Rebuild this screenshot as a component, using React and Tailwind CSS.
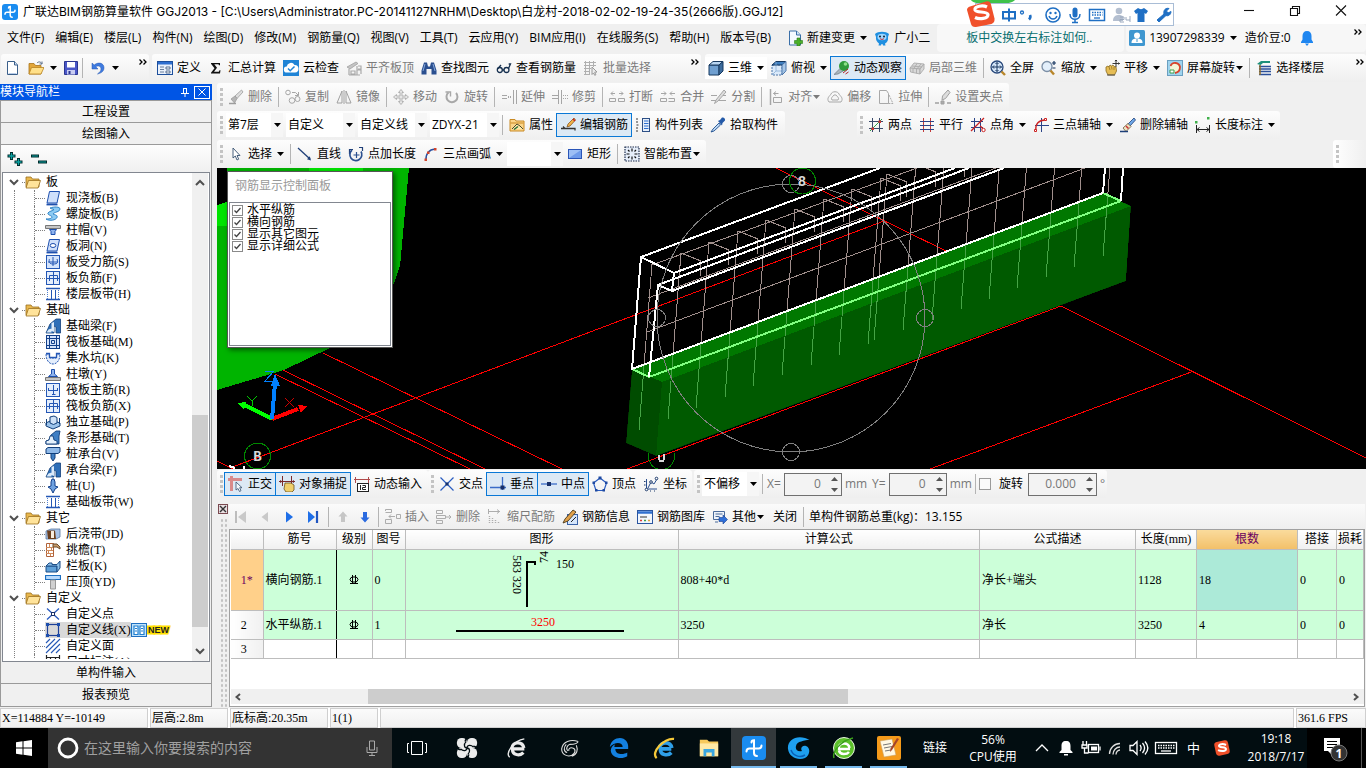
import React from "react";

/* ---------- small drawing helpers ---------- */

const GLYPHS = {
  logo: (
    <>
      <rect width="16" height="16" rx="3" fill="#1a8cf0" />
      <path d="M6.500 4c0-1 .8-1.500 1.700-1.500V11c0 1.500.8 2.300 2 2.300M3 10.300c0-1.500.8-2 2-2h6c1.300 0 2-.6 2-2" fill="none" stroke="#fff" strokeWidth="1.500" strokeLinecap="round" />
    </>
  ),
  newFile: (
    <>
      <path d="M2.500 1.500h7l3 3.500v9.500h-10z" fill="#fff" stroke="#3a5f8a" />
      <path d="M9.500 1.500V5h3" fill="#cfe0f5" stroke="#3a5f8a" />
      <path d="M3.500 13.500h8" stroke="#b8cce8" />
    </>
  ),
  open: (
    <>
      <path d="M1 3.500h5l1.500 2H13V14H1z" fill="#e2a63a" stroke="#a8741a" strokeWidth=".8" />
      <path d="M3.500 7.500H16L13 14H1z" fill="#ffe08a" stroke="#b98422" strokeWidth=".8" />
      <path d="M9 3c2-2 4-1 5 1m0-2.500V4h-2.500" fill="none" stroke="#5a6f8a" strokeWidth="1" />
    </>
  ),
  save: (
    <>
      <path d="M1.500 1.500h13v13h-13z" fill="#4a57c8" stroke="#2c3690" />
      <rect x="4" y="2" width="8" height="5.500" fill="#fff" />
      <rect x="4" y="10" width="8" height="4.500" fill="#c9cdf2" />
      <rect x="5.500" y="11" width="2" height="3" fill="#2c3690" />
    </>
  ),
  undo: <path d="M2 3v6h6L5.800 6.800C8 5 11 6 11 9c0 2-1.500 3.500-3.500 5 4-.8 6.500-3 6.500-6.200C14 3 8.500 1.500 4.200 5z" fill="#3f7be0" stroke="#2456b0" strokeWidth=".5" />,
  define: (
    <>
      <rect x=".5" y="1.500" width="15" height="13" fill="#eaf1fb" stroke="#1d4f9c" />
      <rect x="1" y="2" width="14" height="2.500" fill="#2f6fd0" />
      <path d="M3 7h4M3 9.500h4M3 12h4" stroke="#6a7f9c" />
      <path d="M9 7h4v2H9zM9 11h4v2H9z" fill="#fff" stroke="#35527a" strokeWidth=".8" />
    </>
  ),
  sigma: <path d="M3 3h9v2.200h-1L10.500 4.200H6.300L9 7.800 6 11.800h4.800l.7-1.500h1L12 13.500H3v-.8L6.500 8.200 3 3.800z" fill="#111" />,
  cloud: (
    <>
      <rect width="16" height="16" fill="#1f84d6" />
      <path d="M4 12.500a3 3 0 0 1-.3-6A4.200 4.200 0 0 1 11.500 5a3.700 3.700 0 0 1 .5 7.500z" fill="#fff" />
      <path d="M5 8.500l2.200 2.200L11.500 6.500" fill="none" stroke="#1f84d6" strokeWidth="1.500" />
    </>
  ),
  slabTop: (
    <>
      <path d="M1 7l9-5 2 1.500L4 9z" fill="#c4c4c4" stroke="#9a9a9a" strokeWidth=".7" />
      <path d="M3 9v6M5 11h4v3H5zM11 6v9M3 15h11M12 6h3v3h-3M11 10h4v4" fill="none" stroke="#aaa" strokeWidth="1.200" />
    </>
  ),
  binoc: (
    <>
      <path d="M3 2.500h3l1 4h2l1-4h3l2.500 8v4h-5V9h-5v5.500h-5v-4z" fill="#2a4f8f" />
      <path d="M4 4l-2 7M12 4l2 7" stroke="#86a8dc" />
    </>
  ),
  glasses: (
    <g fill="none" stroke="#16304f" strokeWidth="1.300">
      <circle cx="3.800" cy="10" r="2.500" />
      <circle cx="10.500" cy="10" r="2.500" />
      <path d="M6.300 10h1.700M2 8.500L5 5M12.500 8.500L14.500 4h-1.800" />
    </g>
  ),
  batch: (
    <g fill="none" stroke="#b0b0b0">
      <path d="M1 2.500h12M1 5.500h12M1 8.500h7M1 11.500h6M1 14.500h6M2.500 1v14M6.500 1v14M10.500 1v6" />
      <path d="M9 7l5 5-2.300.2 1.200 2.600-1.200.5L10.500 13 9 14.500z" fill="#ececec" stroke="#999" />
    </g>
  ),
  cube: (
    <>
      <path d="M1 5h10v10H1z" fill="#6f9fd0" stroke="#17395f" />
      <path d="M1 5l4-3.500h10L11 5z" fill="#b9d6f2" stroke="#17395f" />
      <path d="M11 5l4-3.500v9.500L11 15z" fill="#3d6c9e" stroke="#17395f" />
    </>
  ),
  topView: (
    <>
      <path d="M1 5h10v10H1z" fill="#dbeafa" stroke="#4a74a8" strokeDasharray="2 1" />
      <path d="M1 5l4-3.500h10L11 5z" fill="#3f7fc0" stroke="#17395f" />
      <path d="M11 5l4-3.500v9.500L11 15z" fill="#a9c8e8" stroke="#4a74a8" />
      <path d="M5 2v9h10M5 11l-4 4" fill="none" stroke="#8aaed6" strokeWidth=".8" />
    </>
  ),
  orbit: (
    <>
      <path d="M0 14.500l7-7 3 3-6 3.500z" fill="#a8b5bd" stroke="#5d6a72" strokeWidth=".6" />
      <circle cx="10" cy="6" r="5" fill="#2f9a3c" />
      <circle cx="11.500" cy="4" r="1.800" fill="#8ee08a" />
      <path d="M9 13l5-4M11.500 14l3-2" stroke="#b02a2a" />
    </>
  ),
  local3d: (
    <g fill="#d8d8d8" stroke="#aaa" strokeWidth=".9">
      <path d="M1 8l4-5 10 1-4 5z" />
      <path d="M1 8l10 1v5L1.500 12z" />
      <path d="M11 9l4-5v5l-4 5z" />
      <path d="M4 8.500v4M7.500 8.800v4.500M3 6l10 1M8 3.500L5 8.500M12 4L8 8.800" fill="none" />
    </g>
  ),
  fullscreen: (
    <>
      <circle cx="7" cy="7" r="6" fill="#d7e8fa" stroke="#27477a" strokeWidth="1.300" />
      <path d="M11.500 11.500L15 15" stroke="#b8862a" strokeWidth="2.400" />
      <path d="M7 2.500v9M2.500 7h9M5.500 4L7 2.500 8.500 4M5.500 10L7 11.500 8.500 10M4 5.500L2.500 7 4 8.500M10 5.500L11.500 7 10 8.500" fill="none" stroke="#17355f" />
    </>
  ),
  zoom: (
    <>
      <circle cx="6" cy="6.500" r="5" fill="#e3effb" stroke="#7c8fa6" strokeWidth="1.300" />
      <path d="M9.500 10.500L13 14.500" stroke="#b8862a" strokeWidth="2.400" />
      <path d="M11 3h4M13 1v4M11.500 8h3" stroke="#17355f" strokeWidth="1.200" />
    </>
  ),
  pan: (
    <>
      <path d="M2 7l2-1 1 1 1-2 1.500 1L9 5l1 1.500 2 .5.500 4-2 4H4l-2-4z" fill="#e6bd55" stroke="#8a6a1c" strokeWidth=".8" />
      <path d="M5 7l1 3M7.500 6.500l.5 3M10 7v3" stroke="#8a6a1c" strokeWidth=".7" />
      <path d="M3 15h8" stroke="#555" />
      <path d="M12 0v7M8.500 3.500h7M11 1.200L12 0l1 1.200M14.500 2.500l1 1-1 1" fill="none" stroke="#222" strokeWidth=".9" />
    </>
  ),
  rotateScreen: (
    <>
      <rect x=".5" y=".5" width="15" height="15" fill="#9fd4ef" stroke="#6a9fc0" />
      <circle cx="8" cy="8" r="5" fill="#f4f6d8" />
      <path d="M3.500 6A5 5 0 0 1 13 7c0 3-2 5.500-5 6" fill="none" stroke="#d8442c" strokeWidth="1.800" />
      <path d="M3 10h4v3H3z" fill="#fff" stroke="#3f9f4c" />
    </>
  ),
  floors: (
    <>
      <path d="M1 4l4-3h9v2H7L4.500 5z" fill="#1e8f7a" />
      <path d="M3 6.500h12M3 9h12M3 11.500h12M3 14.500h12" stroke="#2b4f9a" strokeWidth="1.400" />
      <path d="M4 5v10" stroke="#8a6a2a" strokeWidth="1.500" />
    </>
  ),
  brush: (
    <g stroke="#9c9c9c" strokeWidth=".8">
      <path d="M13.500 1L7 7l2 2.500 6-6.500z" fill="#ddd" />
      <path d="M7 7l-4 3 3.500 4L9 9.500z" fill="#b5b5b5" />
      <path d="M1 14.500h7" strokeWidth="1.500" />
    </g>
  ),
  copy: (
    <g fill="none" stroke="#a6a6a6">
      <circle cx="3" cy="3.500" r="2.300" />
      <circle cx="7" cy="11.500" r="2.800" />
      <circle cx="12.500" cy="10" r="2.500" />
      <path d="M7 3.500h3.500l3 3M13.500 3v3.500H10" />
    </g>
  ),
  mirror: (
    <g fill="none" stroke="#a0a0a0">
      <path d="M6 2v12H1zM10 2v12h5zM8 1v14" />
    </g>
  ),
  move: <path d="M8 .5l2.500 3H9V7h3.500V5.500l3 2.500-3 2.500V9H9v3.500h1.500l-2.500 3-2.500-3H7V9H3.500v1.500L.5 8l3-2.500V7H7V3.500H5.500z" fill="#e6e6e6" stroke="#a6a6a6" strokeWidth=".8" />,
  rotate: (
    <g fill="none" stroke="#a8a8a8" strokeWidth="2">
      <path d="M4.500 3.500A5.500 5.500 0 1 0 12 4" />
      <path d="M1.500 3h5v4.500" strokeWidth="1.400" />
    </g>
  ),
  extend: (
    <g stroke="#a6a6a6" fill="none">
      <path d="M1 6.500h5M1 9.500h5M12.500 1v14M15.500 1v14" />
      <path d="M7 8h4" strokeDasharray="1 1" strokeWidth="2" />
    </g>
  ),
  trim: (
    <g stroke="#a6a6a6" fill="none">
      <path d="M0 6.500h6M0 9.500h6M6.500 1v14M9.500 1v14" />
      <path d="M11 6.500h5M11 9.500h5" strokeDasharray="1 1" />
    </g>
  ),
  breakIt: (
    <g stroke="#a6a6a6" fill="none">
      <path d="M.5 9.500h6v3h-6zM9.500 9.500h6v3h-6zM2 4.500h4M10 4.500h4M4 2.500l-2 2 2 2M12 2.500l2 2-2 2" />
    </g>
  ),
  merge: (
    <g stroke="#a6a6a6" fill="none">
      <path d="M.5 9.500h6v3h-6zM8.500 9.500h6v3h-6M1 4.500h5M10 4.500h5M4 2.500l2 2-2 2M12 2.500l-2 2 2 2" />
    </g>
  ),
  split: (
    <g stroke="#a6a6a6" fill="none">
      <path d="M0 6.500h6M0 11.500h15M12 6.500h3" />
      <path d="M13 1L5 11l-1.500 3.500L7 12l8-9z" fill="#ddd" />
    </g>
  ),
  align: (
    <g stroke="#a6a6a6" fill="none">
      <path d="M2.500 0v16" strokeWidth="1.500" />
      <path d="M5.500 4.500h5M5.500 8.500h8v5h-8zM8 2.500l-2.500 2 2.500 2" />
    </g>
  ),
  offset: (
    <g stroke="#a8a8a8" fill="none">
      <path d="M2 13c-3-4 1-6 2-8 1-3 7-3 8 0 1 2 5 4 2 8z" />
      <path d="M5 11c-1.500-2 .5-3 1-4 1-1.500 3-1.500 4 0 .5 1 2.500 2 1 4z" />
    </g>
  ),
  stretch: (
    <g stroke="#a8a8a8" fill="none">
      <path d="M1.500 1.500h7l2 3v10h-9z" />
      <path d="M11 6l4 8.500h-5" strokeDasharray="2 1" />
    </g>
  ),
  grip: (
    <g stroke="#a0a0a0" fill="none">
      <path d="M13 1L7.500 7 7 11l3.500-1.500L15 3.500z" fill="#ddd" />
      <path d="M0 14h4M12 14h4" strokeWidth="1.500" />
      <path d="M6 12h3v3H6z" fill="#aaa" />
    </g>
  ),
  props: (
    <>
      <path d="M1 2.500h5l1 1.500h8v10H1z" fill="#fbd58a" stroke="#c98a24" />
      <path d="M1.500 6h13" stroke="#c98a24" />
      <path d="M3 12l5-5 3 2 3 3" fill="#ffe9a8" stroke="#4a4a2a" />
      <path d="M5 12.500l4-3" stroke="#2a6f3a" strokeWidth="1.500" />
    </>
  ),
  editBar: (
    <>
      <path d="M1 11.500h4l-2-2M5 11.500h10v2" fill="none" stroke="#333" strokeWidth="1.300" />
      <path d="M14 1L8 7l-1 3 3-1 5.500-6z" fill="#f1b24a" stroke="#7a4a1a" strokeWidth=".7" />
      <path d="M13 2l2 2" stroke="#c22" strokeWidth="1.500" />
    </>
  ),
  compList: (
    <>
      <path d="M1 2h3M1 5h3M1 11h3M1 14h3M1.500 8h2" stroke="#777" strokeDasharray="2 1" strokeWidth="1.500" />
      <rect x="7.500" y="1.500" width="7" height="13" fill="#e7effa" stroke="#2d4f86" />
      <path d="M9 4h4.500M9 6.500h4.500M9 9h4.500M9 11.500h4.500" stroke="#2d6fd0" strokeWidth="1.200" />
    </>
  ),
  pick: (
    <>
      <path d="M9 6L3 12l-2 3 3-1 6.500-6z" fill="#bcd8f4" stroke="#1f4f8f" strokeWidth=".9" />
      <path d="M8 4l2-1 2-2.500c2-.5 3.500 1 3 3L12.500 6 12 8.500z" fill="#245aa8" />
    </>
  ),
  twoPt: (
    <>
      <path d="M4.500 1v14M11.500 1v14M1 4.500h14M1 11.500h14" stroke="#3a4a6a" />
      <path d="M2 14L14 2" stroke="#2fa04a" />
      <path d="M3.500 10.500h2.500V13H3.500zM10.500 3.500H13V6h-2.500z" fill="#c33" />
    </>
  ),
  parallel: (
    <>
      <path d="M4.500 1v14M11.500 1v14" stroke="#c23a3a" />
      <path d="M1 4.500h14M1 8.500h14M1 12.500h14" stroke="#2a4488" />
    </>
  ),
  ptAngle: (
    <>
      <path d="M4.500 1v14M10.500 1v14M1 4.500h12M1 10.500h12" stroke="#2a4488" />
      <path d="M1 14L14 1M10 9c2 1 3 3 3 5" fill="none" stroke="#c22" strokeWidth="1.300" />
      <circle cx="13.500" cy="13" r="1.700" fill="#fff" stroke="#c22" />
    </>
  ),
  threeAxis: (
    <>
      <path d="M8.500 1v14M2 8.500h14" stroke="#2a4488" />
      <path d="M3 13C2 7 6 3 12 3" fill="none" stroke="#c22" strokeWidth="1.400" />
      <path d="M1.500 12.500h2v2h-2zM11.500 1.500h2v2h-2z" fill="#fff" stroke="#c22" />
    </>
  ),
  delAxis: (
    <>
      <path d="M14 1L8 7l2 2 5.500-6z" fill="#6fa8e8" stroke="#1d3f78" strokeWidth=".8" />
      <path d="M8 6.500L3 11l3 3.500 5-5z" fill="#f0e2c0" stroke="#6a5a3a" strokeWidth=".8" />
      <path d="M0 14.500h8" stroke="#1d3f78" strokeWidth="1.500" />
      <path d="M6 9l2.500 2.500" stroke="#c33" strokeWidth="1.500" />
    </>
  ),
  lenDim: (
    <>
      <path d="M1.500 8v8M14.500 8v8M2 12.500h12M4.500 10.500l-2.500 2 2.500 2M11.500 10.500l2.500 2-2.500 2" fill="none" stroke="#222" />
      <path d="M0 4h2.500v2.500H0zM12 0h2.500v2.500H12z" fill="#3fb04a" />
    </>
  ),
  pointer: <path d="M5 2v10l2.300-2 1.700 4 1.700-.8L9 9.500h3z" fill="#fff" stroke="#35506f" strokeWidth=".9" />,
  line: (
    <>
      <path d="M1 2l12 11" stroke="#1f3f78" strokeWidth="1.300" />
      <path d="M14 14.500l-4-1.200 2.800-3z" fill="#1f3f78" />
    </>
  ),
  ptLen: (
    <>
      <path d="M5 3.500H1.500V8M11 1.500h3.500V5" fill="none" stroke="#1f3f78" strokeWidth="1.200" />
      <path d="M4 4a6 6 0 1 0 9 1.500" fill="none" stroke="#2a4f8f" strokeWidth="1.700" />
      <path d="M8.500 6v6M5.500 9h6" stroke="#2a4f8f" strokeWidth="1.200" />
    </>
  ),
  arc: (
    <>
      <path d="M3 14C2.500 8 6 3.500 12 3" fill="none" stroke="#2a4f9f" strokeWidth="1.400" />
      <path d="M1.500 12.500h2.500v2.500H1.500zM4 5.500h2.500V8H4zM11 2h2.500v2.500H11z" fill="#d2442c" />
    </>
  ),
  rect: (
    <>
      <rect x="1.500" y="3.500" width="13" height="9" fill="#9dbff5" stroke="#2a55b8" />
      <path d="M2 12L14 4v8z" fill="#6f9bea" />
    </>
  ),
  smart: (
    <>
      <rect x="1" y="1" width="14" height="14" fill="#e6eefa" stroke="#1a2a4a" strokeWidth="1.200" strokeDasharray="1.500 1" />
      <path d="M8 2.500v3M8 10.500v3M2.500 8h3M10.500 8h3M4 4l1.500 1.500M12 4l-1.500 1.500M4 12l1.500-1.500M12 12l-1.500-1.500" stroke="#111" strokeWidth="1.200" />
    </>
  ),
  ortho: (
    <>
      <path d="M0 3.500h14M3.500 0v15" stroke="#d98a8a" strokeWidth="3" />
      <path d="M8 6v8l2-1.500 1.500 3 1.500-.8-1.300-3h2.300z" fill="#f3f6fa" stroke="#35506f" strokeWidth=".8" />
    </>
  ),
  snap: (
    <>
      <path d="M3.500 0v10M12.500 0v10M0 5.500h16" stroke="#7a2a2a" />
      <path d="M1 4l2.500 1.500L1 7M15 4l-2.500 1.500L15 7" fill="#7a2a2a" />
      <path d="M6 7h6l3 2v5l-2 2H7l-2-3z" fill="#f0cf6a" stroke="#6a521c" strokeWidth=".8" />
    </>
  ),
  dyn: (
    <>
      <path d="M0 3.500h16M1.500 1v6M14.500 1v6" stroke="#b04a4a" />
      <rect x="3.500" y="7.500" width="11" height="8" fill="#fff" stroke="#222" />
      <path d="M6.500 9v5M8.500 9.500h3v2h-3v2h3.500" fill="none" stroke="#222" />
    </>
  ),
  cross: (
    <>
      <path d="M1.500 1.500l13 13M14.500 1.500l-13 13" stroke="#2a5cc0" strokeWidth="1.200" />
      <rect x="6.500" y="6.500" width="3" height="3" fill="#17306a" />
    </>
  ),
  perp: (
    <>
      <path d="M0 11.500h16M12.500 1v13" stroke="#3a6cc8" strokeWidth="1.300" />
      <rect x="10.500" y="9.500" width="4" height="4" fill="#17306a" />
    </>
  ),
  mid: (
    <>
      <path d="M0 8h16" stroke="#3a6cc8" strokeWidth="1.300" />
      <rect x="6" y="6" width="4" height="4" fill="#17306a" />
    </>
  ),
  vertex: (
    <>
      <path d="M8 2l6.500 5-2.500 7.500H4L1.500 7z" fill="none" stroke="#2a5cc0" strokeWidth="1.200" />
      <path d="M6.500.5h3v3h-3zM.5 5.500h2.500V8H.5zM13 5.500h2.500V8H13zM3 13h2.500v2.500H3zM10.500 13H13v2.500h-2.500z" fill="#1f4aa0" />
    </>
  ),
  coord: (
    <>
      <path d="M3.500 3v10H14M5 12l3-6 3 2 3-5" fill="none" stroke="#2a4f8f" />
      <g fill="#fff" stroke="#1d3a6a">
        <circle cx="3.500" cy="13.500" r="1.300" />
        <circle cx="8" cy="6" r="1.300" />
        <circle cx="13.500" cy="2.500" r="1.300" />
      </g>
      <path d="M1 5.500h1.500M1 9h1.500M7 15h1M11 15h1" stroke="#1d3a6a" />
    </>
  ),
  first: (
    <>
      <path d="M3 2v12" stroke="#bdbdbd" strokeWidth="2" />
      <path d="M13 2v12L5 8z" fill="#c9c9c9" />
    </>
  ),
  prev: <path d="M11 3v10L4.500 8z" fill="#c9c9c9" />,
  next: <path d="M5 2.500v11L12 8z" fill="#1f6fe8" />,
  last: (
    <>
      <path d="M3 2v12l7-6z" fill="#1f6fe8" />
      <path d="M12 2v12" stroke="#1f55c0" strokeWidth="2.200" />
    </>
  ),
  up: <path d="M8 2.500l4.500 5H10V13H6V7.500H3.500z" fill="#c6c6c6" />,
  down: <path d="M8 13.500l4.500-5H10V3H6v5.500H3.500z" fill="#2a6ae0" />,
  insert: (
    <g stroke="#adadad" fill="none">
      <path d="M.5 2V.500h6v3h-6M.5 12v-1.500h6v4h-6z" />
      <path d="M11.500 5.500h4v4h-4zM10 7.500H4M6 5.500l-2 2 2 2" />
    </g>
  ),
  remove: (
    <g stroke="#adadad" fill="none">
      <path d="M.5 1.500h6v3h-6zM.5 6.500h9v3h-9zM.5 11.500h6v3h-6zM10 8h5M13 6l2 2-2 2" />
    </g>
  ),
  scaleBar: (
    <g stroke="#adadad" fill="none">
      <path d="M1 2.500h12M1.500 0v5M10 .5l2.500 2-2.500 2" />
      <path d="M2.500 7v8M5.500 9v6M8.500 11v4M11.500 13v2" strokeDasharray="1 1" strokeWidth="1.400" />
    </g>
  ),
  barInfo: (
    <>
      <rect x="5.500" y="5.500" width="10" height="10" fill="#d6e6fa" stroke="#3a63a8" />
      <path d="M1 14l2-4 8-9 3 2-8 9z" fill="#e0a04a" stroke="#4a3a1a" strokeWidth=".9" />
      <path d="M9 13l5-5" stroke="#222" />
    </>
  ),
  barLib: (
    <>
      <rect x=".5" y="1.500" width="15" height="13" fill="#f2f6fc" stroke="#2a55a0" />
      <path d="M1 3.500h14" stroke="#2f6fd0" strokeWidth="2.500" />
      <path d="M3 8h7" stroke="#333" />
      <path d="M3 11.500h2" stroke="#e03a3a" strokeWidth="1.500" />
      <path d="M7 11.500h2" stroke="#3aa04a" strokeWidth="1.500" />
      <path d="M11 11.500h2" stroke="#e0a03a" strokeWidth="1.500" />
    </>
  ),
  other: (
    <>
      <path d="M1.500 2.500h11v8h-11z" fill="#eef3fa" stroke="#4a6a9a" />
      <path d="M3.500 5h7M3.500 7.500h4M3 13h3" stroke="#4a6a9a" />
      <path d="M7 8.500h4V6l4.500 4.500L11 15v-2.500H7z" fill="#2f6fd8" stroke="#173f90" strokeWidth=".6" />
    </>
  ),
  change: (
    <>
      <path d="M2.500 1h7l4 4v10h-11z" fill="#f4f9ff" stroke="#3a6fa8" />
      <path d="M9.500 1v4h4" fill="#cfe2f5" stroke="#3a6fa8" />
      <path d="M10 8h3v2.500h2.500v3H13V16h-3v-2.500H7.500v-3H10z" fill="#4ab02a" stroke="#2a7a1a" strokeWidth=".6" />
    </>
  ),
  mascot: (
    <>
      <path d="M1 4c3-3 11-3 14 0l-1 3c.5 4-1.500 6-3 6.500l.5 2H9l-.5-1.500h-1L7 15.500H4.500l.5-2C3 12 1.500 10 2 7z" fill="#1f8fe0" />
      <ellipse cx="8" cy="7" rx="4.500" ry="3.200" fill="#9fd6ff" />
      <circle cx="6" cy="6.500" r="1" fill="#123" />
      <circle cx="10" cy="6.500" r="1" fill="#123" />
      <path d="M6 8.500c1 1.200 3 1.200 4 0" fill="none" stroke="#c33" />
    </>
  ),
  user: (
    <>
      <rect width="16" height="16" rx="1.500" fill="#3f97d0" />
      <circle cx="8" cy="5.500" r="3" fill="#fff" />
      <path d="M2.500 13c0-3.500 2-4.500 5.500-4.500s5.500 1 5.500 4.500z" fill="#fff" />
      <path d="M8 9v3" stroke="#3f97d0" />
    </>
  ),
  bell: <path d="M8 1c3 0 4.500 2 4.500 5v3.500L14 12v1H2v-1l1.500-2.500V6C3.500 3 5 1 8 1zM6 13.500h4L8 16z" fill="#1f86f0" />,
  /* navigation tree */
  folder: (
    <>
      <path d="M1 3h5l1.500 2H14v8H1z" fill="#e9b84e" stroke="#9a7020" strokeWidth=".8" />
      <path d="M3.500 6.500H15.500L13 14H1z" fill="#ffe39a" stroke="#9a7020" strokeWidth=".8" />
    </>
  ),
  slab: (
    <>
      <path d="M4.500 1.500h10L12 13H2z" fill="#cfe0fb" stroke="#1d4fae" />
      <path d="M1.500 14.500H12.500" stroke="#1d4fae" strokeWidth="1.800" />
    </>
  ),
  spiral: <path d="M5 2c4-1.500 10-1.500 10 1 0 3-6 3-7 5 2 1 5 1 4 3.500C11 14 5 15.500 1 13c3 0 6-.5 6-2S2 9 3 7s5-2 6-3.500C8 3 6 3 5 2z" fill="#8ccbf4" stroke="#1f78c0" strokeWidth=".9" />,
  cap: (
    <>
      <path d="M.5 3.500h15v3h-15z" fill="#c6c6c6" stroke="#777" />
      <path d="M4.500 7.500h7L10 9.500v3H6v-3z" fill="#8fb4ee" stroke="#1d4fae" />
    </>
  ),
  hole: (
    <>
      <path d="M4.500 1.500h10L12 13H2z" fill="#cfe0fb" stroke="#1d4fae" />
      <path d="M1.500 14.500H12.500" stroke="#1d4fae" strokeWidth="1.800" />
      <ellipse cx="8" cy="7.500" rx="2.800" ry="2" fill="#fff" stroke="#1d4fae" />
    </>
  ),
  gridS: (
    <>
      <rect x="1.500" y="1.500" width="13" height="13" fill="#d5e4fb" stroke="#2457b5" />
      <path d="M8 3v9M4.500 5c0 0-2 5 3.500 5s5-2 4-5M3 8h10" fill="none" stroke="#2457b5" />
    </>
  ),
  gridF: (
    <>
      <rect x="1.500" y="1.500" width="13" height="13" fill="#e4eefc" stroke="#2457b5" />
      <path d="M1 8.500h14M8.500 1v14M4.500 11V5.500h8V11" fill="none" stroke="#2457b5" />
    </>
  ),
  band: (
    <>
      <path d="M1 2.500h14M1 13.500h14" stroke="#2457b5" strokeWidth="1.600" />
      <path d="M6.500 4v9M10.500 4v9" stroke="#2457b5" />
      <path d="M2.500 4v9M13.500 4v9" stroke="#4f7fd0" strokeDasharray="1 1" />
    </>
  ),
  beam: (
    <>
      <path d="M1 15l4-9 6-5h4.500v14H11V9L9 8v7z" fill="#2e6fb8" stroke="#123f7a" strokeWidth=".8" />
      <path d="M1.500 14.500l2-3 3-1v4zM6.500 13V5l2.500-1v10z" fill="#dcebfa" />
    </>
  ),
  raft: (
    <>
      <rect x="1.500" y="1.500" width="13" height="13" fill="#d5e4fb" stroke="#123f8a" />
      <path d="M4.500 1v14M11.500 1v14M1 4.500h14M1 11.500h14M6.500 6.500h3v3h-3z" fill="none" stroke="#123f8a" />
    </>
  ),
  pit: (
    <>
      <path d="M1 4h3l1 4h6l1-4h3c0 6-3 10-7 10S1 10 1 4z" fill="#e4eefc" stroke="#2457b5" strokeDasharray="2 1" />
      <path d="M1 3.500h3.500v4h7v-4H15" fill="none" stroke="#2457b5" strokeWidth="1.300" />
    </>
  ),
  pier: (
    <>
      <path d="M.5 11.500h15v3h-15z" fill="#c6c6c6" stroke="#777" />
      <path d="M6.500 3.500h3V8l3 2.500h-9l3-2.500z" fill="#8fb4ee" stroke="#1d4fae" />
    </>
  ),
  gridR: (
    <>
      <rect x="1.500" y="1.500" width="13" height="13" fill="#e4eefc" stroke="#2457b5" />
      <path d="M8.500 3v10M3 8.500h10M3.500 6v3M12.500 6v3M7 12.500h3.500" fill="none" stroke="#2457b5" />
    </>
  ),
  indep: (
    <>
      <path d="M1 9l6-3 8 3v3l-7 3-7-3z" fill="#9cc3ea" stroke="#123f7a" />
      <path d="M5 3l4-1 3 1.500V9L8.500 10.500 5 9z" fill="#cfe2f7" stroke="#123f7a" />
      <path d="M1.500 5v6M14.500 4v6" stroke="#123f7a" />
    </>
  ),
  strip: (
    <>
      <path d="M1 14v-3l3-1 2-5 5-4h4l-1 5v8z" fill="#3f7fc4" stroke="#123f7a" strokeWidth=".9" />
      <path d="M1 14v-3l3-1 1-4h3l1 4 3 1v3z" fill="#e4f0fb" stroke="#123f7a" strokeWidth=".9" />
    </>
  ),
  pileCap: (
    <>
      <path d="M1 3l2-1.500h12V6l-2 1.500H1z" fill="#8fb9e8" stroke="#123f7a" />
      <path d="M6 7.500h4V12l-2 3-2-3z" fill="#3f7fc4" stroke="#123f7a" />
    </>
  ),
  pile: <path d="M7 1h2l1 3v4l3 1-3 2-2 4-2-4-3-2 3-1V4z" fill="#6fa2e0" stroke="#123f8a" />,
  pour: (
    <>
      <path d="M1 5l5-2h9v8l-4 2H1z" fill="#a9c4ea" stroke="#55779f" strokeWidth=".8" />
      <path d="M2 4.500h8L11 13H3z" fill="#6b3f1f" />
      <path d="M6 5h3v7H6z" fill="#f7ede0" />
    </>
  ),
  eave: (
    <>
      <path d="M1.500 1.500h7v13h-7z" fill="#fff" stroke="#b0623a" />
      <path d="M1 5.500h7M1 8.500h7M1 11.500h7M4.500 2v3M6.500 5v3M3.500 8v3M5.500 11v3" stroke="#d08a5a" />
      <path d="M8 2h4l3 3v2l-3-2H8z" fill="#c79a6a" stroke="#6a4a2a" />
    </>
  ),
  rail: (
    <>
      <path d="M1 8h11v6H1z" fill="#5fa0d8" stroke="#1d4f88" />
      <path d="M1 8l3-3h3v1.500h5L15 3v7l-3 4V8z" fill="#8cc0ea" stroke="#1d4f88" />
    </>
  ),
  coping: (
    <>
      <path d="M.5 1.500h15v4h-15z" fill="#b9dafc" stroke="#1d6fc0" strokeWidth="1.200" />
      <path d="M5.500 6h5v9h-5z" fill="#d0d0d0" stroke="#999" />
    </>
  ),
  custPt: (
    <>
      <path d="M2 2.500l12 11M14 2.500l-12 11" stroke="#2a5cc0" strokeWidth="1.300" />
      <rect x="6.500" y="6.500" width="3" height="3" fill="#fff" stroke="#17306a" />
    </>
  ),
  custLine: (
    <>
      <rect x="2.500" y="2.500" width="11" height="11" fill="none" stroke="#1d3f98" strokeWidth="1.200" />
      <path d="M1 1h3v3H1zM12 1h3v3h-3zM1 12h3v3H1zM12 12h3v3h-3z" fill="#1d4fae" />
    </>
  ),
  custFace: <path d="M1 5l4-4M1 10l9-9M1 15L15 1M6 15l9-9M11 15l4-4" stroke="#2457b5" strokeWidth="1.100" />,
  dimension: <path d="M1 3.500h14M1.500 1v14M5.500 3v5M10.500 3v5M14.500 1v14" stroke="#222" strokeWidth="1.200" />,
  book: (
    <>
      <rect x=".5" y="1.500" width="15" height="13" fill="#bfe2fb" stroke="#1f6fc0" />
      <path d="M3 4h4v8.500H3zM9 4h4v8.500H9z" fill="#fff" stroke="#1f7fd0" strokeWidth="1.200" />
      <path d="M4 6.500h2M4 9h2M10 6.500h2M10 9h2" stroke="#1f7fd0" />
    </>
  ),
};

const Ic = ({ n, c = "size-4" }) => (
  <svg viewBox="0 0 16 16" className={`shrink-0 ${c}`} aria-hidden="true">
    {GLYPHS[n]}
  </svg>
);

const Caret = ({ c = "" }) => (
  <svg viewBox="0 0 7 4" className={`h-1 w-[7px] shrink-0 ${c}`} aria-hidden="true">
    <path d="M0 0h7L3.500 4z" fill="currentColor" />
  </svg>
);

/* One toolbar command: icon, caption and an optional drop-down arrow. */
const Tb = ({ i, t, off, on, arrow, tight }) => (
  <button
    type="button"
    disabled={off}
    className={`flex h-[22px] shrink-0 items-center gap-1 whitespace-nowrap px-[3px] ${
      on ? "bg-[#dce9f5] outline-1 outline-[#0a78d6]" : ""
    } ${off ? "text-[#7b7b7b]" : "text-black"}`}
  >
    {i && <Ic n={i} />}
    {t}
    {arrow && <Caret c="ml-px" />}
    {tight && <Caret c="-ml-[3px]" />}
  </button>
);

const Sep = () => <span className="mx-[2px] h-5 w-px shrink-0 bg-[#b4b4b4]" />;

const Grip = () => (
  <span className="mx-px flex h-[18px] w-[3px] shrink-0 flex-col justify-between">
    {[0, 1, 2, 3].map((k) => (
      <i key={k} className="size-[3px] bg-[#c4c4c4]" />
    ))}
  </span>
);

const Bar = ({ children, c = "" }) => (
  <div
    className={`flex h-[28px] shrink-0 items-center gap-px rounded-[3px] bg-linear-to-b from-[#fdfdfd] to-[#efefef] px-[2px] ${c}`}
  >
    {children}
  </div>
);

const Combo = ({ v, label, w }) => (
  <label className={`relative flex h-[24px] shrink-0 items-center bg-white ${w}`}>
    <select aria-label={label} className="h-full w-full appearance-none bg-white pl-[2px]">
      <option>{v}</option>
    </select>
    <span className="pointer-events-none absolute right-0 flex h-full w-3 items-center justify-center bg-[#f6f6f6]">
      <Caret />
    </span>
  </label>
);

const More = ({ c = "" }) => (
  <button type="button" aria-label="更多" className={`shrink-0 ${c}`}>
    <svg viewBox="0 0 8 6" className="h-[6px] w-2">
      <path d="M.5.500L3 3 .5 5.500M4.500.500L7 3 4.500 5.500" fill="none" stroke="#000" strokeWidth="1.300" />
    </svg>
  </button>
);

/* ---------- title bar ---------- */

function ImeBar() {
  return (
    <div className="absolute top-0 left-[967px] h-7 w-[208px]">
      <svg viewBox="0 0 208 28" className="h-7 w-[208px]" aria-hidden="true">
        <path d="M4 0c2 6 40 6 44 0z" fill="#3fc24a" />
        <rect x="8.500" y="3.500" width="198" height="22" fill="#fff" stroke="#a9bdd6" />
        <path d="M3 6.500L19 1.500q4-1 5 3l3.500 14q.5 4-3 5.500L9 27q-4 .5-5-3L0 10q0-2.500 3-3.500z" fill="#f0502a" />
        <path d="M20 7c-4-2-13-1-12 3 1 3 12 1 13 4.500.5 4.500-9 5-13 3" fill="none" stroke="#fff" strokeWidth="3.200" />
        <g fill="none" stroke="#1f6fc4" strokeWidth="2">
          <path d="M36 12h12v6.500H36zM42 8.500v13" />
          <circle cx="55" cy="12.500" r="1.500" strokeWidth="1.300" />
          <path d="M63 15c1 2 .5 3-1 4.500" strokeWidth="2.600" />
          <circle cx="86" cy="15" r="7" strokeWidth="1.600" />
          <path d="M82 16c1.500 4 6.500 4 8 0" strokeWidth="1.500" />
          <path d="M103 14c0 7 10 7 10 0M108 19v4M105 22.500h6" strokeWidth="1.500" />
        </g>
        <circle cx="83.500" cy="13" r="1.200" fill="#1f6fc4" />
        <circle cx="88.500" cy="13" r="1.200" fill="#1f6fc4" />
        <rect x="105.500" y="7.500" width="5" height="10" rx="2.500" fill="#1f6fc4" />
        <rect x="122.500" y="9.500" width="15" height="11" fill="#fff" stroke="#1f6fc4" strokeWidth="1.500" />
        <path d="M125 12.500h10.500M125 15h10.500" stroke="#1f6fc4" strokeDasharray="1.500 1" strokeWidth="1.300" />
        <path d="M127 18h6" stroke="#1f6fc4" strokeWidth="1.300" />
        <g fill="#b4bfd0">
          <circle cx="152" cy="11" r="3.300" />
          <path d="M146 21c0-5 3-6 6-6 2 0 3 .5 4 1.500V21z" />
        </g>
        <path d="M153 17h4v2.500h-4V22h4M159 17v3h4M163 16v6" fill="none" stroke="#9aa8bd" />
        <path d="M167 11l4-3c1.500 1.500 4.500 1.500 6 0l4 3-2 3-1.500-1v9h-7v-9l-1.500 1z" fill="#1f6fc4" />
        <path d="M190 20l7-6c-1-4 2-6.500 5-5.500l-2.500 2.500 1.500 2 3-1.500c0 3-2.500 5-5 4L192 22z" fill="#1f6fc4" stroke="#1f6fc4" />
      </svg>
    </div>
  );
}

function TitleBar() {
  return (
    <header className="relative flex h-6 items-center bg-white pl-[2px]">
      <Ic n="logo" />
      <h1 className="ml-[5px] text-xs whitespace-nowrap [font-family:Inter,'Noto_Sans_CJK_SC',sans-serif]">
        广联达BIM钢筋算量软件 GGJ2013 - [C:\Users\Administrator.PC-20141127NRHM\Desktop\白龙村-2018-02-02-19-24-35(2666版).GGJ12]
      </h1>
      <div className="mr-[2px] ml-auto flex h-full">
        {[
          ["最小化", "M3 7.500h10"],
          ["还原", "M3.500 5.500h7v7h-7zM5.500 5V3.500h7v7H11"],
          ["关闭", "M3 2.500l10 10M13 2.500l-10 10"],
        ].map(([label, d]) => (
          <button key={label} type="button" aria-label={label} className="flex w-[46px] items-start justify-center pt-[3px]">
            <svg viewBox="0 0 16 16" className="size-4">
              <path d={d} fill="none" stroke="#111" strokeWidth="1.100" />
            </svg>
          </button>
        ))}
      </div>
      <ImeBar />
    </header>
  );
}

function MenuBar() {
  const menus = ["文件(F)", "编辑(E)", "楼层(L)", "构件(N)", "绘图(D)", "修改(M)", "钢筋量(Q)", "视图(V)", "工具(T)", "云应用(Y)", "BIM应用(I)", "在线服务(S)", "帮助(H)", "版本号(B)"];
  return (
    <nav className="flex h-7 items-center bg-[#f0f0f0] pl-[2px]">
      <div className="flex gap-px">
        {menus.map((m) => (
          <button key={m} type="button" className="shrink-0 px-[5px] whitespace-nowrap">
            {m}
          </button>
        ))}
      </div>
      <div className="ml-2 flex items-center gap-px">
        <Tb i="change" t="新建变更" arrow />
        <Tb i="mascot" t="广小二" />
      </div>
      <div className="ml-1 flex h-7 w-[187px] items-center rounded bg-[#f8f8f8] pl-[29px] [font-family:'Liberation_Serif','Noto_Sans_CJK_SC',serif]">
        <a href="#tip" className="whitespace-nowrap text-[#0a7070]">板中交换左右标注如何..</a>
      </div>
      <div className="ml-[2px] flex h-7 flex-1 items-center gap-px rounded bg-[#f7f7f7]">
        <Tb i="user" t="13907298339" arrow />
        <span className="ml-1 flex items-center gap-2 whitespace-nowrap">造价豆:0 <Ic n="bell" /></span>
        <More c="mr-1 mb-3 ml-auto" />
      </div>
    </nav>
  );
}

function MainToolbar() {
  return (
    <div className="flex h-[31px] items-center bg-[#f0f0f0] pl-px">
      <Bar c="w-[148px]">
        <button type="button" aria-label="新建" className="w-6 pl-[2px]"><Ic n="newFile" /></button>
        <button type="button" aria-label="打开" className="flex items-center gap-[6px]"><Ic n="open" /><Caret /></button>
        <button type="button" aria-label="保存" className="ml-[5px]"><Ic n="save" /></button>
        <Sep />
        <button type="button" aria-label="撤销" className="ml-1 flex items-center gap-[6px]"><Ic n="undo" /><Caret /></button>
        <More c="mb-3 ml-auto" />
      </Bar>
      <Bar c="ml-[3px] w-[549px]">
        <Tb i="define" t="定义" />
        <Tb i="sigma" t="汇总计算" />
        <Tb i="cloud" t="云检查" />
        <Tb i="slabTop" t="平齐板顶" off />
        <Tb i="binoc" t="查找图元" />
        <Tb i="glasses" t="查看钢筋量" />
        <Tb i="batch" t="批量选择" off />
        <More c="mb-3 ml-auto" />
      </Bar>
      <Bar c="ml-1 flex-1 pl-0">
        <div className="bg-white"><Tb i="cube" t="三维" arrow /></div>
        <Tb i="topView" t="俯视" arrow />
        <Tb i="orbit" t="动态观察" on />
        <Tb i="local3d" t="局部三维" off />
        <Sep />
        <Tb i="fullscreen" t="全屏" />
        <Tb i="zoom" t="缩放" arrow />
        <Tb i="pan" t="平移" arrow />
        <Tb i="rotateScreen" t="屏幕旋转" tight />
        <Sep />
        <Tb i="floors" t="选择楼层" />
        <More c="mb-3 ml-auto" />
      </Bar>
    </div>
  );
}

/* ---------- navigation panel ---------- */

const TREE = [
  ["板", [["slab", "现浇板(B)"], ["spiral", "螺旋板(B)"], ["cap", "柱帽(V)"], ["hole", "板洞(N)"], ["gridS", "板受力筋(S)"], ["gridF", "板负筋(F)"], ["band", "楼层板带(H)"]]],
  ["基础", [["beam", "基础梁(F)"], ["raft", "筏板基础(M)"], ["pit", "集水坑(K)"], ["pier", "柱墩(Y)"], ["gridR", "筏板主筋(R)"], ["gridF", "筏板负筋(X)"], ["indep", "独立基础(P)"], ["strip", "条形基础(T)"], ["pileCap", "桩承台(V)"], ["beam", "承台梁(F)"], ["pile", "桩(U)"], ["band", "基础板带(W)"]]],
  ["其它", [["pour", "后浇带(JD)"], ["eave", "挑檐(T)"], ["rail", "栏板(K)"], ["coping", "压顶(YD)"]]],
  ["自定义", [["custPt", "自定义点"], ["custLine", "自定义线(X)"], ["custFace", "自定义面"], ["dimension", "尺寸标注(A)"]]],
];

const PanelButton = ({ children }) => (
  <button type="button" className="h-[22px] w-full shrink-0 border-b border-[#9a9a9a] bg-[#f0f0f0] text-center">
    {children}
  </button>
);

const Chevron = ({ d, c = "" }) => (
  <svg viewBox="0 0 10 8" className={`h-2 w-[10px] shrink-0 ${c}`} aria-hidden="true">
    <path d={d} fill="none" stroke="#505050" strokeWidth="2" />
  </svg>
);

function NavPanel() {
  return (
    <aside className="flex w-[212px] shrink-0 flex-col pt-px [font-family:'Liberation_Serif','Noto_Sans_CJK_SC',serif]">
      <div className="flex h-4 shrink-0 items-center bg-[#0055e5] text-[12px] leading-4 text-white">
        模块导航栏
        <svg viewBox="0 0 8 9" className="ml-auto h-[9px] w-2" aria-hidden="true">
          <path d="M2.500 0v5M5.500 0v5M2 .500h4M0 5.500h8M4 5.500V9" stroke="#fff" fill="none" />
        </svg>
        <button type="button" aria-label="关闭导航栏" className="mr-[2px] ml-[5px] flex h-[13px] w-4 items-center justify-center border border-white">
          <svg viewBox="0 0 8 8" className="size-2"><path d="M.5.500l7 7M7.500.500l-7 7" stroke="#fff" /></svg>
        </button>
      </div>
      <div className="flex grow flex-col border border-[#9a9a9a]">
        <PanelButton>工程设置</PanelButton>
        <PanelButton>绘图输入</PanelButton>
        <div className="flex h-[27px] shrink-0 items-center gap-2 bg-linear-to-b from-[#fdfdfd] to-[#f0f0f0] pl-[6px]">
          <button type="button" aria-label="全部展开">
            <svg viewBox="0 0 16 16" className="size-4"><path d="M4.500 1v8M.500 5h8M11.500 7v8M7.500 11h8" stroke="#002a2a" strokeWidth="3" /><path d="M4.500 2v6M1.500 5h6M11.500 8v6M8.500 11h6" stroke="#0aa0a0" strokeWidth="1.300" /></svg>
          </button>
          <button type="button" aria-label="全部折叠">
            <svg viewBox="0 0 16 16" className="size-4"><path d="M0 5h8M7 11h9" stroke="#002a2a" strokeWidth="3" /><path d="M1 5h6M8 11h7" stroke="#0aa0a0" strokeWidth="1.200" /></svg>
          </button>
        </div>
        <div className="mx-px flex min-h-0 grow basis-[0px] overflow-hidden border border-[#828790] bg-white">
          <ul className="mb-[2px] min-w-0 flex-1 overflow-hidden pt-px pl-[6px]">
            {TREE.map(([group, kids]) => (
              <li key={group}>
                <div className="flex h-4 items-center">
                  <Chevron d="M1 2l4 4 4-4" />
                  <span className="ml-[3px] w-[3px] border-t border-dotted border-[#808080]" />
                  <Ic n="folder" />
                  <span className="ml-[5px] leading-4">{group}</span>
                </div>
                <ul className="ml-[5px] border-l border-dotted border-[#808080]">
                  {kids.map(([icon, name]) => {
                    const on = name === "自定义线(X)";
                    return (
                      <li key={name} className="ml-[19px] flex h-4 items-center border-l border-dotted border-[#808080] whitespace-nowrap">
                        <span className="w-[10px] border-t border-dotted border-[#808080]" />
                        <span className={`flex items-center ${on ? "bg-[#d9d9d9]" : ""}`}>
                          <Ic n={icon} />
                          <a href="#item" className="ml-[5px] leading-4">{name}</a>
                        </span>
                        {on && (
                          <>
                            <Ic n="book" />
                            <svg viewBox="0 0 24 12" className="h-3 w-6" aria-hidden="true">
                              <text x="1" y="9" fontSize="9" fontWeight="bold" fontFamily="Liberation Sans" stroke="#ffe000" strokeWidth="3" paintOrder="stroke" fill="#222">NEW</text>
                            </svg>
                          </>
                        )}
                      </li>
                    );
                  })}
                </ul>
              </li>
            ))}
          </ul>
          <div className="mr-px flex w-4 flex-col items-center bg-[#f0f0f0] py-[6px]">
            <Chevron d="M1 6l4-4 4 4" />
            <div className="mt-[228px] h-[212px] w-full shrink-0 bg-[#cdcdcd]" />
            <Chevron d="M1 2l4 4 4-4" c="mt-auto" />
          </div>
        </div>
        <div className="shrink-0">
          <PanelButton>单构件输入</PanelButton>
          <button type="button" className="h-[22px] w-full bg-[#f0f0f0]">报表预览</button>
        </div>
      </div>
    </aside>
  );
}

/* ---------- model view ---------- */

const STIRRUPS = [
  [639, 430], [668, 419], [696, 408], [725, 397], [753, 386], [782, 375], [811, 365], [839, 355], [868, 344],
  [874, 340], [903, 330], [932, 320], [961, 309], [989, 299], [1017, 288], [1046, 277], [1074, 267], [1103, 256],
];

function ModelView() {
  const bars = STIRRUPS.map(([x, y]) => `M${x} ${y}L${x + 13} ${y - 166}`).join("");
  const hooks = STIRRUPS.slice(1, 13).map(([x, y]) => `M${x + 13} ${y - 166}l20 8l-1 15`).join("");
  return (
    <svg viewBox="217 168 1149 301" preserveAspectRatio="xMidYMid slice" className="block h-[301px] w-full bg-black" shapeRendering="crispEdges">
      <defs>
        <clipPath id="wall">
          <path d="M632 369L1103 193l28 13-5 75-470 175-30-13z" />
        </clipPath>
      </defs>
      <path d="M217 205l10-2v-35h182l-9 98-6 17-64 65-46 22-67 20z" fill="#00b400" />
      <path d="M217 205l10-3v24h-10zM309 168h54v4h-54z" fill="#00e400" />
      <g stroke="#f00" fill="none">
        <path d="M230 468L884 221M776 168l170 83M323 353l239 116M283 370l202 99M275 374l195 95M217 461l16 8M1061 306l305 152M930 469l264-98" />
      </g>
      <path d="M627 469l434-163" stroke="#f00" />
      <g fill="none" stroke="#a08f8c">
        <path d={bars} />
        <path d={hooks} />
        <path d="M652 265l265-97M648 298l348-130M647 332l438-164" />
      </g>
      <g clipPath="url(#wall)">
        <path d="M632 369L1103 193l28 13-469 176z" fill="#007800" />
        <path d="M662 382l469-176-5 75-470 175z" fill="#005a00" />
        <path d="M632 369l30 13-6 74-30-13z" fill="#004c00" />
        <path d={bars} stroke="#46a446" fill="none" />
      </g>
      <path d="M649 377L1121 201M632 369l17 8M1103 193l18 8" stroke="#80ff80" strokeWidth="2" fill="none" />
      <path d="M880 168L641 257l-9 112L1103 193M641 257l33 16M955 168L674 273l-2 18L1004 168M969 168L658 285l-9 92M658 285l14 6M1105 168l-2 25M1123 168l-2 33" fill="none" stroke="#fff" strokeWidth="2" />
      <g fill="none" stroke="#808080">
        <circle cx="791" cy="318" r="134" />
        <circle cx="791" cy="184" r="8.500" />
        <circle cx="791" cy="452" r="8.500" />
        <circle cx="657" cy="318" r="8.500" />
        <circle cx="925" cy="318" r="8.500" />
      </g>
      <g fill="none" stroke="#008800">
        <circle cx="257.500" cy="456" r="13" />
        <circle cx="802.500" cy="181" r="13" />
        <path d="M649 453a13 13 0 1 0 25 0" />
      </g>
      <g fill="#d8d8d8" fontSize="14" fontFamily="Liberation Mono" textAnchor="middle" fontWeight="bold">
        <text x="257.500" y="461">B</text>
        <text x="802" y="186">8</text>
      </g>
      <path d="M659 455v4l1 2h3l1-2v-5" fill="none" stroke="#d8d8d8" strokeWidth="2" />
      <path d="M229 466l6 2M244 466v3" stroke="#fff" strokeWidth="2" />
      <g fill="none" strokeWidth="4">
        <path d="M272 419l26-10" stroke="#f00" />
        <path d="M272 419l-27-14" stroke="#0f0" />
        <path d="M272 419l3-36" stroke="#0080ff" />
      </g>
      <path d="M307 406l-9-1 3 8z" fill="#f00" />
      <path d="M237 403l9-1-2 8z" fill="#0f0" />
      <path d="M275 374l5 12h-9z" fill="#0080ff" />
      <path d="M265 371h9l-9 10h9" stroke="#0080ff" fill="none" />
      <path d="M285 398l9 9M294 398l-9 9" stroke="#c00" />
      <path d="M247 396l5 5 5-5M252 401v5" stroke="#0c0" fill="none" />
    </svg>
  );
}

function DisplayPanel() {
  return (
    <section className="absolute top-[3px] left-[10px] flex h-[177px] w-[166px] flex-col border border-[#555] bg-white p-px shadow-[2px_2px_5px_rgba(0,0,0,0.5)]">
      <h2 className="h-[29px] pl-[6px] leading-[26px] text-[#999]">钢筋显示控制面板</h2>
      <div className="flex-1 border border-[#828790] pt-px pl-[2px] [font-family:'Liberation_Serif','Noto_Sans_CJK_SC',serif]">
        {["水平纵筋", "横向钢筋", "显示其它图元", "显示详细公式"].map((t) => (
          <label key={t} className="flex h-3 items-center gap-1 leading-3">
            <span className="relative flex size-[11px]">
              <input type="checkbox" defaultChecked className="size-[11px] appearance-none border border-[#8a8a8a] bg-white" />
              <svg viewBox="0 0 11 11" className="pointer-events-none absolute inset-0 size-[11px]">
                <path d="M2.500 5.500l2 2 4-4.500" fill="none" stroke="#444" strokeWidth="1.300" />
              </svg>
            </span>
            {t}
          </label>
        ))}
      </div>
    </section>
  );
}

const Spin = ({ label, v, w }) => (
  <span className={`flex h-[23px] shrink-0 items-center border border-[#707070] bg-[#f3f3f3] ${w}`}>
    <input aria-label={label} defaultValue={v} className="w-0 flex-1 bg-transparent pr-[10px] text-right text-[#777]" />
    <span className="mr-[3px] flex w-[7px] flex-col gap-[7px] text-[#555]">
      <Caret c="rotate-180" />
      <Caret />
    </span>
  </span>
);

function SnapToolbar() {
  return (
    <div className="flex h-[30px] shrink-0 items-center bg-[#f0f0f0]">
      <Bar c="w-[211px]">
        <Grip />
        <Tb i="ortho" t="正交" on />
        <Tb i="snap" t="对象捕捉" on />
        <Tb i="dyn" t="动态输入" />
      </Bar>
      <Bar>
        <Grip />
        <Tb i="cross" t="交点" />
        <Tb i="perp" t="垂点" on />
        <Tb i="mid" t="中点" on />
        <Tb i="vertex" t="顶点" />
        <Tb i="coord" t="坐标" />
      </Bar>
      <Bar c="ml-[2px]">
        <Grip />
        <Combo v="不偏移" label="偏移方式" w="w-[57px]" />
        <Sep />
        <span className="flex items-center gap-[3px] pl-px text-[#777]">
          X= <Spin label="X 偏移" v="0" w="w-[58px]" /> mm
          <span className="ml-[2px]">Y=</span> <Spin label="Y 偏移" v="0" w="w-[58px]" /> mm
        </span>
        <Sep />
        <label className="mr-1 flex items-center gap-2">
          <input type="checkbox" className="size-3 appearance-none border border-[#9a9a9a] bg-[#fafafa]" />
          旋转
        </label>
        <Spin label="旋转角度" v="0.000" w="w-[69px]" />
        <span className="ml-[2px] text-[#777]">°</span>
      </Bar>
    </div>
  );
}

/* ---------- rebar editor ---------- */

function NavBtn({ n, label, w = "w-6" }) {
  return (
    <button type="button" aria-label={label} className={`flex justify-center ${w}`}>
      <Ic n={n} />
    </button>
  );
}

function RebarToolbar() {
  return (
    <div className="flex h-[25px] items-center gap-px bg-linear-to-b from-[#fbfbfb] to-[#eeeeee] whitespace-nowrap">
      <div className="flex">
        <NavBtn n="first" label="首条" />
        <NavBtn n="prev" label="上一条" />
        <NavBtn n="next" label="下一条" />
        <NavBtn n="last" label="末条" />
      </div>
      <Sep />
      <NavBtn n="up" label="上移" w="w-[21px]" />
      <NavBtn n="down" label="下移" w="w-[21px]" />
      <Sep />
      <Tb i="insert" t="插入" off />
      <Tb i="remove" t="删除" off />
      <Tb i="scaleBar" t="缩尺配筋" off />
      <Tb i="barInfo" t="钢筋信息" />
      <Tb i="barLib" t="钢筋图库" />
      <Tb i="other" t="其他" tight />
      <span className="w-px" />
      <Tb t="关闭" />
      <Sep />
      <span className="pl-[2px]">单构件钢筋总重(kg)：13.155</span>
    </div>
  );
}

const GradeMark = () => (
  <svg viewBox="0 0 10 10" className="mx-auto size-[10px]" aria-label="三级钢">
    <ellipse cx="5" cy="4.500" rx="4" ry="2.600" fill="none" stroke="#000" />
    <path d="M3.500 0v9M6.500 0v9M1 8.500h8" fill="none" stroke="#000" />
  </svg>
);

const HookShape = () => (
  <svg viewBox="0 0 272 60" className="mx-auto block h-[60px] w-[272px]">
    <path d="M121 57V12h8v3" fill="none" stroke="#000" strokeWidth="2" />
    <g fontSize="12" fontFamily="Liberation Serif" fill="#000">
      <text transform="translate(107 5) rotate(90)">583 320</text>
      <text transform="translate(142 13) rotate(-90)">74</text>
      <text x="150" y="18">150</text>
    </g>
  </svg>
);

const StraightShape = () => (
  <svg viewBox="0 0 272 28" className="mx-auto block h-7 w-[272px]">
    <text x="125" y="15" fontSize="12" fontFamily="Liberation Serif" fill="#f00">3250</text>
    <path d="M50 20h168" stroke="#000" strokeWidth="2" />
  </svg>
);

const HEADS = ["", "筋号", "级别", "图号", "图形", "计算公式", "公式描述", "长度(mm)", "根数", "搭接", "损耗"];
const ROWS = [
  ["1*", "横向钢筋.1", <GradeMark />, "0", <HookShape />, "808+40*d", "净长+端头", "1128", "18", "0", "0"],
  ["2", "水平纵筋.1", <GradeMark />, "1", <StraightShape />, "3250", "净长", "3250", "4", "0", "0"],
  ["3", "", "", "", "", "", "", "", "", "", ""],
];
const ROW_H = ["h-[61px]", "h-[29px]", "h-[19px]"];

function RebarTable() {
  return (
    <div className="flex flex-1 flex-col border border-[#a0a0a0] bg-white pb-px pl-px [font-family:'Liberation_Serif','Noto_Sans_CJK_SC',serif]">
      <table className="w-full table-fixed border-collapse leading-4">
        <colgroup>
          <col className="w-[32px]" />
          <col className="w-[73px]" />
          <col className="w-[36px]" />
          <col className="w-[33px]" />
          <col className="w-[273px]" />
          <col />
          <col className="w-[156px]" />
          <col className="w-[61px]" />
          <col className="w-[101px]" />
          <col className="w-[39px]" />
          <col className="w-[27px]" />
        </colgroup>
        <thead>
          <tr className="h-[19px]">
            {HEADS.map((h, k) => (
              <th
                key={k}
                className={`overflow-hidden border-r border-b border-[#bdbdbd] p-0 font-normal whitespace-nowrap ${
                  k === 8 ? "bg-linear-to-b from-[#fadb9c] to-[#f2c069] text-[#6a0060]" : "bg-linear-to-b from-white to-[#f0f0f0]"
                }`}
              >
                {h}
              </th>
            ))}
          </tr>
        </thead>
        <tbody>
          {ROWS.map((row, r) => (
            <tr key={r} className={`${ROW_H[r]} ${r < 2 ? "bg-[#ccffd9]" : "bg-white"}`}>
              {row.map((cell, k) => (
                <td
                  key={k}
                  className={`border-b border-[#bdbdbd] whitespace-nowrap ${
                    k === 1 ? "border-r border-r-black" : "border-r"
                  } ${k === 4 ? "p-0" : k === 0 ? (r === 0 ? "p-0 text-center" : "pr-[6px] text-center") : k === 2 ? "p-0" : "px-[2px] py-0"} ${
                    k === 0 ? (r === 0 ? "bg-[#ffd08a] text-[#6a0060]" : "bg-linear-to-r from-white to-[#f0f0f0]") : ""
                  } ${k === 8 && r === 0 ? "bg-[#acead8]" : ""}`}
                >
                  {cell}
                </td>
              ))}
            </tr>
          ))}
        </tbody>
      </table>
      <div className="mt-auto mb-px flex h-[15px] items-center bg-[#f0f0f0] px-1">
        <Chevron d="M5 1L1.500 4 5 7" />
        <div className="flex h-full flex-1 pl-[123px]">
          <div className="h-full w-[480px] bg-[#cdcdcd]" />
        </div>
        <Chevron d="M4 1l3.500 3L4 7" />
      </div>
    </div>
  );
}

function RebarEditor() {
  return (
    <div className="mt-[5px] flex flex-1">
      <div className="flex w-3 flex-col items-center">
        <button type="button" aria-label="关闭编辑区" className="size-[10px] bg-[#7a4a50]">
          <svg viewBox="0 0 10 10" className="size-[10px]"><rect x="1" y="1" width="8" height="8" fill="#e9dfe2" /><path d="M2 2l6 6M8 2L2 8" stroke="#333" strokeWidth="1.400" /></svg>
        </button>
        <div className="mt-1 w-[7px] flex-1 bg-[radial-gradient(circle,#c2c2c2_1px,transparent_1.5px)] bg-[length:4px_5px]" />
      </div>
      <div className="flex min-w-0 flex-1 flex-col pr-px">
        <RebarToolbar />
        <RebarTable />
      </div>
    </div>
  );
}

/* ---------- workspace ---------- */

function Workspace() {
  return (
    <main className="ml-[5px] flex min-w-0 flex-1 flex-col">
      <div className="flex h-7 items-center">
        <Bar c="w-[792px]">
          <Grip />
          <Tb i="brush" t="删除" off />
          <Sep />
          <Tb i="copy" t="复制" off />
          <Tb i="mirror" t="镜像" off />
          <Sep />
          <Tb i="move" t="移动" off />
          <Tb i="rotate" t="旋转" off />
          <Sep />
          <Tb i="extend" t="延伸" off />
          <Tb i="trim" t="修剪" off />
          <Sep />
          <Tb i="breakIt" t="打断" off />
          <Tb i="merge" t="合并" off />
          <Tb i="split" t="分割" off />
          <Sep />
          <Tb i="align" t="对齐" off tight />
          <Tb i="offset" t="偏移" off />
          <Tb i="stretch" t="拉伸" off />
          <Sep />
          <Tb i="grip" t="设置夹点" off />
        </Bar>
      </div>
      <div className="flex h-7 items-center">
        <Bar c="w-[568px]">
          <Grip />
          <div className="flex gap-[3px] pl-px">
            <Combo v="第7层" label="楼层" w="w-[57px]" />
            <Combo v="自定义" label="构件类别" w="w-[69px]" />
            <Combo v="自定义线" label="构件类型" w="w-[69px]" />
            <Combo v="ZDYX-21" label="构件" w="w-[69px]" />
          </div>
          <Sep />
          <Tb i="props" t="属性" />
          <Tb i="editBar" t="编辑钢筋" on />
          <Tb i="compList" t="构件列表" />
          <Tb i="pick" t="拾取构件" />
        </Bar>
        <Bar c="ml-[72px]">
          <Grip />
          <Tb i="twoPt" t="两点" />
          <Tb i="parallel" t="平行" />
          <Tb i="ptAngle" t="点角" arrow />
          <Tb i="threeAxis" t="三点辅轴" arrow />
          <Tb i="delAxis" t="删除辅轴" />
          <Tb i="lenDim" t="长度标注" arrow />
        </Bar>
      </div>
      <div className="flex h-[29px] items-center">
        <Bar c="w-[489px]">
          <Grip />
          <Tb i="pointer" t="选择" arrow />
          <Sep />
          <Tb i="line" t="直线" />
          <Tb i="ptLen" t="点加长度" />
          <Tb i="arc" t="三点画弧" arrow />
          <Combo v="" label="画法" w="w-[56px]" />
          <Tb i="rect" t="矩形" />
          <Sep />
          <Tb i="smart" t="智能布置" tight />
        </Bar>
        <Bar c="mr-px ml-auto w-8 bg-linear-to-r from-white to-[#f0f0f0]">
          <Grip />
        </Bar>
      </div>
      <div className="relative">
        <ModelView />
        <DisplayPanel />
      </div>
      <SnapToolbar />
      <RebarEditor />
    </main>
  );
}

/* ---------- status bar and taskbar ---------- */

function StatusBar() {
  const cell = "h-full border border-[#cfcfcf] bg-linear-to-b from-[#fbfbfb] to-[#f0f0f0] pl-[1px] leading-[18px] whitespace-pre";
  return (
    <footer className="flex h-5 shrink-0 gap-[2px] bg-white [font-family:'Liberation_Serif','Noto_Sans_CJK_SC',serif]">
      <span className={`${cell} w-[148px]`}>X=114884 Y=-10149</span>
      <span className={`${cell} w-[78px]`}>层高:2.8m</span>
      <span className={`${cell} w-[98px]`}>底标高:20.35m</span>
      <span className={`${cell} w-[48px]`}>1(1)</span>
      <span className={`${cell} flex-1`} />
      <span className={`${cell} w-[70px]`}>361.6 FPS</span>
    </footer>
  );
}

const APPS = {
  swirl: (
    <>
      <g fill="#ececec">
        <rect x="1" y="1" width="11" height="11" rx="5" />
        <rect x="12" y="1" width="11" height="11" rx="5" />
        <rect x="1" y="12" width="11" height="11" rx="5" />
        <rect x="12" y="12" width="11" height="11" rx="5" />
        <rect x="6" y="6" width="12" height="12" />
      </g>
      <path d="M12 12c-3 0-4-4-1-7M12 12c0-3 4-4 7-1M12 12c3 0 4 4 1 7M12 12c0 3-4 4-7 1M12 1c-1 1-2 2-2 4M23 12c-1-1-2-2-4-2M12 23c1-1 2-2 2-4M1 12c1 1 2 2 4 2" fill="none" stroke="#020d11" strokeWidth="1.400" />
    </>
  ),
  eWhite: (
    <g fill="none" stroke="#ececec">
      <path d="M20 13H7c0 7 8 8 12 4M6.500 12C7 5 18 4 19.500 12" strokeWidth="3.500" />
      <path d="M4 22C-1 18 8 4 20 2" strokeWidth="1.500" />
    </g>
  ),
  gThin: (
    <g fill="none" stroke="#ddd" strokeWidth="1.200">
      <path d="M22 5c-8-3-17 0-18 8 0 6 6 9 11 7 4-2 5-7 1-8-3-1-5 1-4 3M20 9c2 5 1 10-5 12M9 8c-3 3-3 8 1 9M22 5c-1 3-5 3-9 3-3 1-5 5-2 7" />
    </g>
  ),
  edge: <path d="M2 11C3 4 8 1 13 1c6 0 9 5 9 9v3H8c0 6 8 7 13 4v4c-6 4-17 2-18-6 0-3 2-6 5-7-1 1-1 2-1 3h9c0-6-9-6-14 0z" fill="#1380e0" />,
  ie: (
    <g fill="none">
      <path d="M20 13H8c0 7 8 8 12 4M7 12C8 5 19 4 20.500 12" stroke="#2f9fe8" strokeWidth="4" />
      <path d="M4 23C-3 17 12 1 23 2" stroke="#f5c83a" strokeWidth="2.500" />
    </g>
  ),
  files: (
    <>
      <path d="M2 3h8l2 2h10v16H2z" fill="#f7c95c" />
      <path d="M2 7h20v14H2z" fill="#ffe9a6" />
      <path d="M6 13h12v8h-3v-4H9v4H6z" fill="#3aa6e0" />
    </>
  ),
  gld: (
    <>
      <rect width="24" height="24" rx="4" fill="#1a8cf0" />
      <path d="M9.500 6.500c0-1.500 1-2.200 2.500-2.200V17c0 2 1 3 3 3M4.500 15.500c0-2.200 1-3 3-3h9c2 0 3-1 3-3" fill="none" stroke="#fff" strokeWidth="2" strokeLinecap="round" />
    </>
  ),
  gBlue: (
    <>
      <path d="M24 3c-2 1-3 0-6-1C8-1 0 5 1 13c1 8 10 12 17 9 5-3 6-10 1-12-4-1-6 3-4 5-4 1-7-1-6-5 1-5 8-5 15-7z" fill="#1ea0f0" />
      <path d="M4 14c2 6 9 8 14 5" fill="none" stroke="#0a60b8" strokeWidth="1.500" />
    </>
  ),
  eGreen: (
    <>
      <circle cx="12" cy="12" r="10.500" fill="#5cc02a" stroke="#e8f5e0" />
      <path d="M6 13h12M6.500 12c1-6 10-6 11 0M7 14.500c1 5 8 4 10 1.500" fill="none" stroke="#fff" strokeWidth="2.500" />
      <path d="M2 22C0 16 8 5 21 2" fill="none" stroke="#3aa01a" strokeWidth="1.500" />
    </>
  ),
  note: (
    <>
      <rect width="24" height="24" rx="2" fill="#f59a1a" />
      <path d="M3 5l12-2 4 16-12 2z" fill="#fff8e4" stroke="#c8a060" strokeWidth=".6" />
      <path d="M6 9l8-1.500M7 12l8-1.500M8 15l6-1" stroke="#777" />
      <path d="M20 2l2 1-7 11-2 2 .500-3.500z" fill="#a5452a" />
    </>
  ),
};

const TASKS = [
  ["swirl", ""], ["eWhite", ""], ["gThin", ""], ["edge", ""], ["ie", ""], ["files", ""],
  ["gld", "active"], ["gBlue", "open"], ["eGreen", "open"], ["note", "open"],
];

function Taskbar() {
  return (
    <div className="flex h-10 shrink-0 items-center bg-[#020d11] text-white">
      <button type="button" aria-label="开始" className="flex h-full w-12 items-center justify-center bg-black">
        <svg viewBox="0 0 16 16" className="size-4"><path d="M0 2.200L6.500 1.300v6.200H0zM7.500 1.200L16 0v7.500H7.500zM0 8.500h6.500v6.200L0 13.800zM7.500 8.500H16V16l-8.500-1.200z" fill="#fff" /></svg>
      </button>
      <label className="flex h-full w-[344px] items-center bg-[#333] pl-2">
        <svg viewBox="0 0 24 24" className="size-6 shrink-0"><circle cx="12" cy="12" r="9" fill="none" stroke="#fff" strokeWidth="2.800" /></svg>
        <input aria-label="搜索" placeholder="在这里输入你要搜索的内容" className="ml-1 w-0 flex-1 bg-transparent text-sm placeholder:text-[#a0a0a0]" />
        <svg viewBox="0 0 12 16" className="mr-[14px] h-4 w-3"><path d="M3.500 1h5v9h-5zM1 7v5.500h10V7M6 12.500V15M3 15.500h6" fill="none" stroke="#aaa" /></svg>
      </label>
      <button type="button" aria-label="任务视图" className="flex w-[50px] justify-center">
        <svg viewBox="0 0 22 16" className="h-4 w-[22px]"><path d="M5.500 1.500h11v13h-11zM3 3.500H1.500v9H3M19 3.500h1.500v9H19" fill="none" stroke="#fff" /></svg>
      </button>
      <div className="flex h-full">
        {TASKS.map(([n, s], k) => (
          <button
            key={n}
            type="button"
            aria-label={n}
            className={`relative flex h-full items-center justify-center ${k < 2 ? "w-[50px]" : k === 2 ? "w-[54px]" : "w-[45px]"} ${s === "active" ? "bg-[#33393c]" : ""}`}
          >
            <svg viewBox="0 0 24 24" className={s ? "size-6" : "size-[22px]"}>{APPS[n]}</svg>
            {s && <span className={`absolute bottom-0 h-[2px] bg-[#76b9ed] ${s === "active" ? "inset-x-0" : "inset-x-1"}`} />}
          </button>
        ))}
      </div>
      <span className="ml-[6px] w-9 text-center">链接</span>
      <div className="ml-3 flex w-14 flex-col items-center leading-[17px] whitespace-nowrap">
        <span>56%</span>
        <span>CPU使用</span>
      </div>
      <div className="ml-auto flex h-full items-center">
        <svg viewBox="0 0 210 24" className="h-6 w-[210px]" aria-hidden="true">
          <g fill="none" stroke="#fff" strokeWidth="1.300">
            <path d="M10 15l6-6 6 6" />
            <rect x="62.500" y="8.500" width="10" height="8" />
            <path d="M74 10.500v4M57 5v4M60.500 5v4M56 9h5v3h-5zM58.500 12v5h4" />
            <path d="M83.500 18c0-6 5-10.500 10.500-10.500M87 18.500c0-4 3-7.500 7-7.500M90 18.500c0-2.500 2-4.500 4-4.500" stroke="#ddd" />
            <path d="M104 9.500h3l4-4v13l-4-4h-3zM114 9c1.500 2 1.500 4 0 6M116.500 7c2.500 3 2.500 7 0 10M119 5.500c3.500 4 3.500 9 0 13" />
            <rect x="129.500" y="6.500" width="21" height="11" />
            <path d="M132 9.500h17M132 12h17" strokeDasharray="1.500 1" />
            <path d="M135 15h10" />
          </g>
          <path d="M65 10.500h6v4h-6z" fill="#fff" />
          <path d="M40 5c3.500 0 4.500 2 4.500 5v4l2 2v1h-13v-1l2-2v-4c0-3 1-5 4.500-5zM38 18h4v1.500h-4z" fill="#fff" />
          <rect x="189" y="5" width="14" height="14" rx="3" fill="#f0502a" transform="rotate(-12 196 12)" />
          <path d="M200 9c-3-1.500-7-1-7 1s7 .5 7 3-5 2.500-8 1.200" fill="none" stroke="#fff" strokeWidth="2" />
          <text x="161" y="17" fontSize="13" fill="#fff" fontFamily="Noto Sans CJK SC">中</text>
        </svg>
        <div className="ml-[9px] w-[62px] text-center leading-[18px]">
          <div>19:18</div>
          <div>2018/7/17</div>
        </div>
        <button type="button" aria-label="通知" className="flex h-full w-[54px] items-center bg-black pl-[15px]">
          <svg viewBox="0 0 28 28" className="size-7">
            <path d="M2 4h16v13h-8v4l-4-4H2z" fill="#fff" />
            <path d="M5 7.500h10M5 10.500h10M5 13.500h6" stroke="#000" />
            <circle cx="17" cy="19" r="8" fill="#333" stroke="#777" />
            <text x="17" y="23.500" fontSize="12" fontWeight="bold" textAnchor="middle" fill="#fff" fontFamily="Open Sans">1</text>
          </svg>
        </button>
        <span className="h-full w-[5px] border-l border-[#555] bg-black" />
      </div>
    </div>
  );
}

export default function App() {
  return (
    <div className="flex min-h-screen flex-col overflow-hidden bg-[#f0f0f0] text-xs text-black [font-family:'Open_Sans','Noto_Sans_CJK_SC',sans-serif]">
      <TitleBar />
      <MenuBar />
      <MainToolbar />
      <div className="mb-px flex flex-1">
        <NavPanel />
        <Workspace />
      </div>
      <StatusBar />
      <Taskbar />
    </div>
  );
}
